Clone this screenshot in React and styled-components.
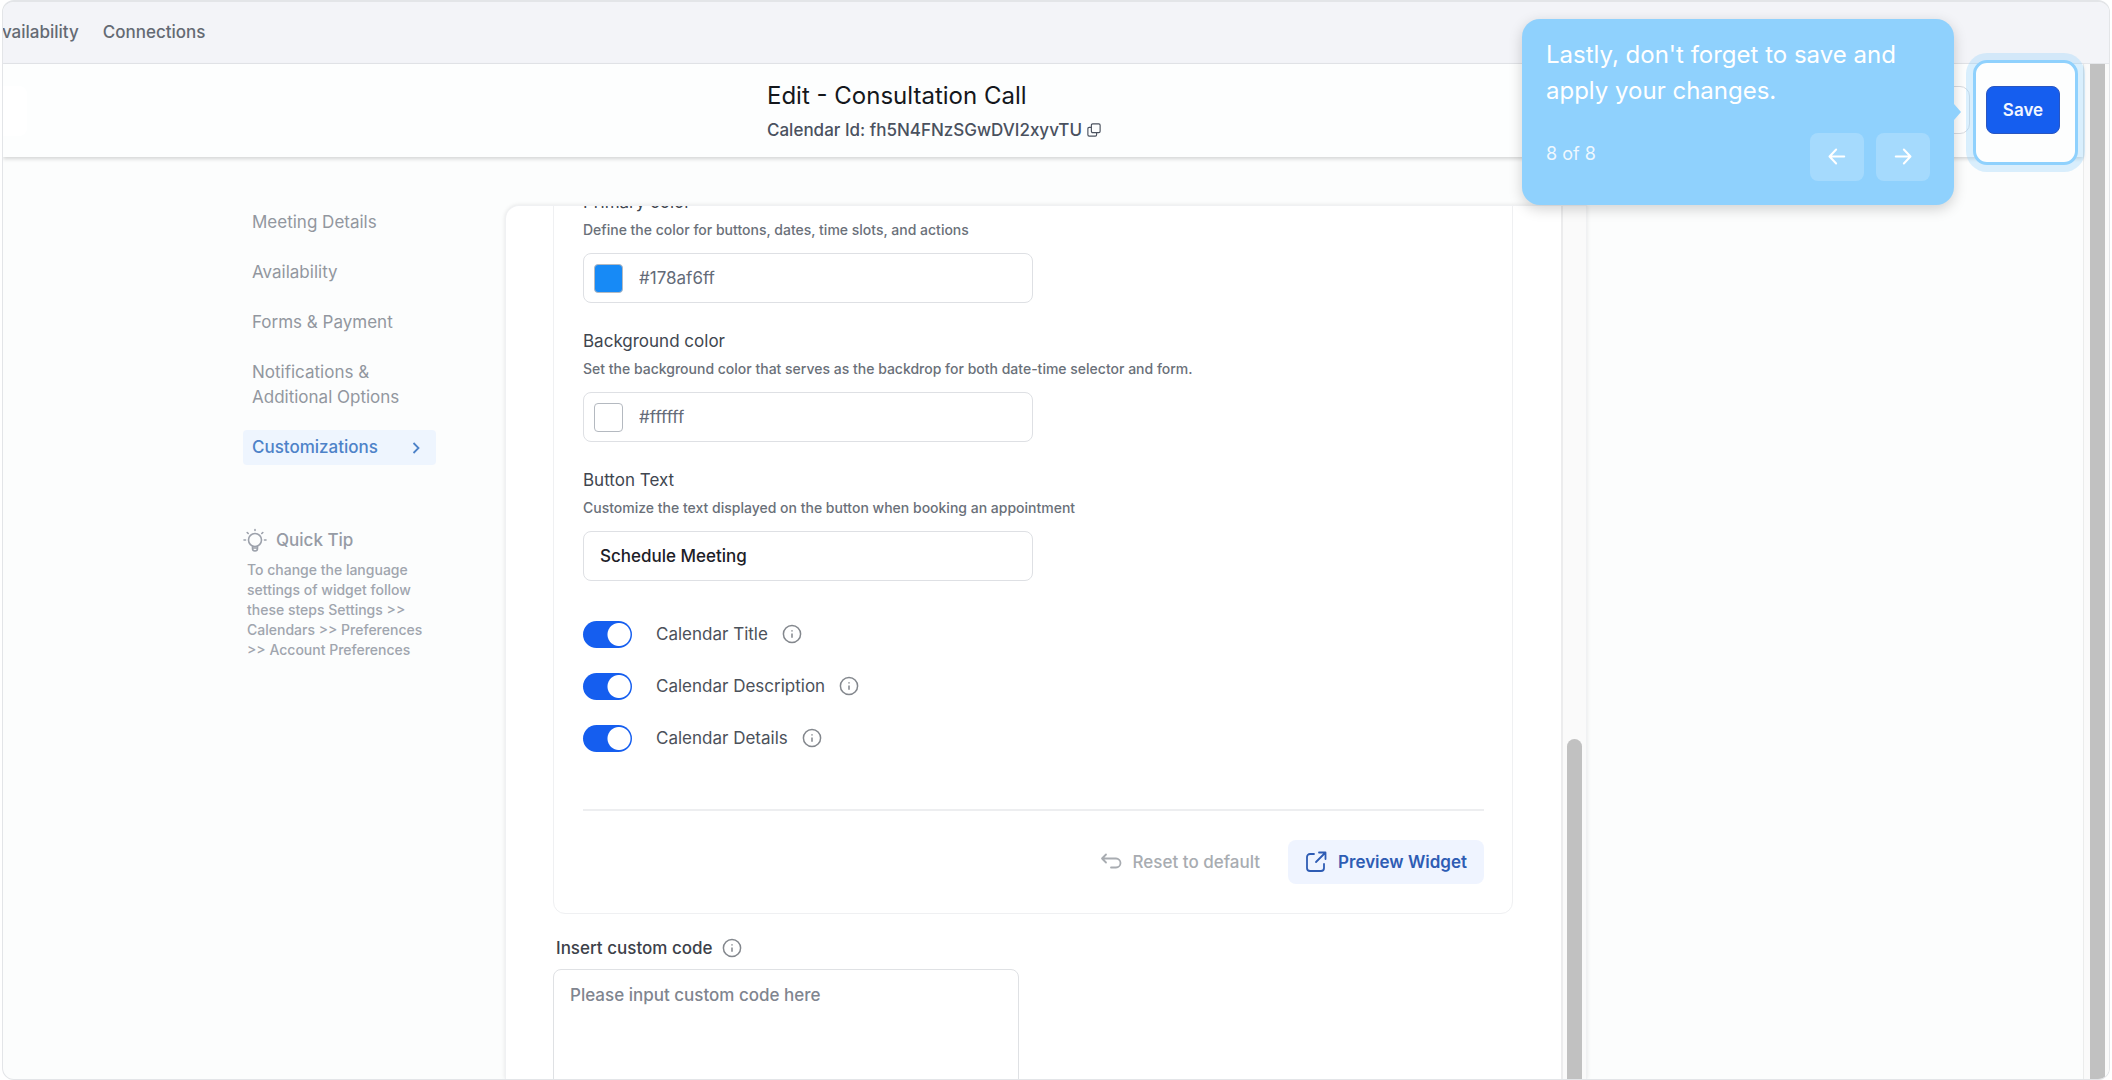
import React from 'react'
import styled, { createGlobalStyle } from 'styled-components'

const GlobalStyle = createGlobalStyle`
* {
  box-sizing: border-box;
}
body {
  margin: 0;
  background: #fff;
  font-family: 'Inter', 'Liberation Sans', sans-serif;
}
button, input, textarea {
  font-family: inherit;
}
`

const sections = ['Meeting Details', 'Availability', 'Forms & Payment', 'Notifications & Additional Options']
const toggles = ['Calendar Title', 'Calendar Description', 'Calendar Details']

const InfoIcon = () => (
  <InfoSvg viewBox="0 0 20 20">
    <circle cx="10" cy="10" r="8.6" />
    <path d="M10 9.4v4.4M10 6.2v1.2" />
  </InfoSvg>
)

const ColorField = ({ id, label, hint, value, color }) => (
  <Field>
    <Label htmlFor={id}>{label}</Label>
    <Hint>{hint}</Hint>
    <InputBox>
      <Swatch $color={color} />
      <ColorInput id={id} defaultValue={value} />
    </InputBox>
  </Field>
)

const Tour = () => (
  <TourCard>
    <TourText>Lastly, don't forget to save and apply your changes.</TourText>
    <TourFooter>
      <TourCount>8 of 8</TourCount>
      <TourButton aria-label="Previous">
        <ArrowSvg viewBox="0 0 20 20"><path d="M18.5 10H1.5M9 1.8L1.2 10L9 18.2" /></ArrowSvg>
      </TourButton>
      <TourButton aria-label="Next">
        <ArrowSvg viewBox="0 0 20 20"><path d="M1.5 10h17M11 1.8l7.8 8.2L11 18.2" /></ArrowSvg>
      </TourButton>
    </TourFooter>
  </TourCard>
)

const App = () => {
  return (
    <Frame>
      <GlobalStyle />
      <TopBar>
        <TopLink href="#availability">Availability</TopLink>
        <TopLink href="#connections">Connections</TopLink>
      </TopBar>
      <Main>
        <Page>
          <Header>
            <BackButton aria-label="Back" />
            <Heading>
              <Title>Edit - Consultation Call</Title>
              <CalendarId>
                Calendar Id: fh5N4FNzSGwDVI2xyvTU
                <CopySvg viewBox="0 0 16 16">
                  <rect x="5" y="1" width="10" height="10" rx="1.5" />
                  <path d="M5 5H2.500A1.500 1.500 0 0 0 1 6.500v7A1.500 1.500 0 0 0 2.500 15h7a1.500 1.500 0 0 0 1.500-1.500V11" />
                </CopySvg>
              </CalendarId>
            </Heading>
            <Actions>
              <CancelButton aria-label="Cancel" />
              <SaveWrap>
                <SaveRing />
                <SaveButton>Save</SaveButton>
                <Tour />
              </SaveWrap>
            </Actions>
          </Header>
          <Body>
            <Sidebar>
              <Menu>
                {sections.map(name => <MenuLink href="#" key={name}>{name}</MenuLink>)}
                <MenuLink href="#" $active>
                  Customizations
                  <ChevronSvg viewBox="0 0 8 12"><path d="M1.500 1l5 5l-5 5" /></ChevronSvg>
                </MenuLink>
              </Menu>
              <TipTitle>
                <BulbSvg viewBox="0 0 24 24">
                  <circle cx="12" cy="12" r="6.500" />
                  <path d="M9.500 18.200V20.500a2.500 2.500 0 0 0 5 0V18.200M9.500 20h5" />
                  <path d="M12 1.500v1M1 12h1.500M21.500 12H23M4.200 4.500l1 1M19.800 4.500l-1 1" />
                </BulbSvg>
                Quick Tip
              </TipTitle>
              <TipText>
                To change the language settings of widget follow these steps Settings &gt;&gt; Calendars &gt;&gt; Preferences &gt;&gt; Account Preferences
              </TipText>
            </Sidebar>
            <Panel>
              <PanelContent>
                <Card>
                  <ColorField
                    id="primary"
                    label="Primary color"
                    hint="Define the color for buttons, dates, time slots, and actions"
                    value="#178af6ff"
                    color="#178af6"
                  />
                  <ColorField
                    id="background"
                    label="Background color"
                    hint="Set the background color that serves as the backdrop for both date-time selector and form."
                    value="#ffffff"
                    color="#ffffff"
                  />
                  <Field>
                    <Label htmlFor="buttonText">Button Text</Label>
                    <Hint>Customize the text displayed on the button when booking an appointment</Hint>
                    <InputBox>
                      <TextInput id="buttonText" defaultValue="Schedule Meeting" />
                    </InputBox>
                  </Field>
                  <Toggles>
                    {toggles.map(name => (
                      <ToggleRow key={name}>
                        <Switch type="checkbox" defaultChecked />
                        {name}
                        <InfoIcon />
                      </ToggleRow>
                    ))}
                  </Toggles>
                  <CardFooter>
                    <ResetButton>
                      <FooterSvg viewBox="0 0 22 22">
                        <path d="M6 3.500L2 7.500l4 4M2 7.500h14a4.500 4.500 0 0 1 0 9h-5" />
                      </FooterSvg>
                      Reset to default
                    </ResetButton>
                    <PreviewButton>
                      <FooterSvg viewBox="0 0 22 22">
                        <path d="M9 3H5a3 3 0 0 0-3 3v11a3 3 0 0 0 3 3h11a3 3 0 0 0 3-3v-4M14 1.500h6.500V8M20 2l-9 9" />
                      </FooterSvg>
                      Preview Widget
                    </PreviewButton>
                  </CardFooter>
                </Card>
                <CodeLabel htmlFor="code">
                  Insert custom code
                  <InfoIcon />
                </CodeLabel>
                <CodeArea id="code" placeholder="Please input custom code here" />
              </PanelContent>
              <PanelScroll>
                <PanelThumb />
              </PanelScroll>
            </Panel>
          </Body>
        </Page>
        <PageScroll>
          <PageThumb />
        </PageScroll>
      </Main>
    </Frame>
  )
}

const Frame = styled.div`
display: flex;
flex-direction: column;
height: 100vh;
margin: 0 2px;
border: 1px solid #e3e5e8;
border-top-width: 2px;
border-radius: 12px;
background: #fcfdfd;
overflow: hidden;
`

const TopBar = styled.nav`
display: flex;
align-items: center;
gap: 24px;
flex: none;
height: 62px;
padding-bottom: 2px;
border-bottom: 1px solid #e4e6ea;
background: #f3f4f8;
`

const TopLink = styled.a`
color: #646a73;
font-size: 17px;
font-weight: 500;
text-decoration: none;

&:first-child {
  margin-left: -12px;
}
`

const Main = styled.div`
display: flex;
flex: 1;
min-height: 0;
`

const Page = styled.div`
display: flex;
flex-direction: column;
flex: 1;
min-width: 0;
`

const Header = styled.header`
display: flex;
align-items: center;
flex: none;
height: 93px;
padding-right: 23px;
background: #fdfefe;
box-shadow: 0 2px 4px rgba(0, 0, 0, 0.16);
z-index: 1;
`

const BackButton = styled.button`
width: 24px;
height: 50px;
border: 0;
border-radius: 0 8px 8px 0;
background: #fff;
`

const Heading = styled.div`
flex: 1;
padding: 2px 0 0 740px;
`

const Title = styled.h1`
margin: 0;
color: #14171c;
font-size: 24px;
font-weight: 400;
line-height: 36px;
`

const CalendarId = styled.div`
display: flex;
align-items: center;
gap: 5px;
color: #4a515e;
font-size: 17px;
font-weight: 500;
line-height: 32px;
`

const CopySvg = styled.svg`
width: 14px;
height: 14px;
fill: none;
stroke: #4a515e;
stroke-width: 1.3;
`

const Actions = styled.div`
display: flex;
gap: 16px;
padding-bottom: 2px;
`

const CancelButton = styled.button`
width: 90px;
height: 48px;
border: 1px solid #d9dce1;
border-radius: 10px;
background: #fff;
`

const SaveWrap = styled.div`
position: relative;
`

const SaveRing = styled.div`
position: absolute;
inset: -26px -18px -31px -13px;
border: 3px solid #8fd1fd;
border-radius: 14px;
background: #fdfefe;
box-shadow: 0 0 0 7px rgba(143, 209, 253, 0.32);
`

const SaveButton = styled.button`
position: relative;
width: 74px;
height: 48px;
padding: 0;
border: 1px solid #2a56c0;
border-radius: 8px;
background: #155eef;
color: #f2f6ff;
font-size: 17px;
font-weight: 600;
`

const TourCard = styled.div`
position: absolute;
top: -67px;
right: calc(100% + 32px);
width: 432px;
padding: 18px 24px 24px;
border-radius: 18px;
background: #8fd1fd;
box-shadow: 0 4px 14px rgba(0, 0, 0, 0.18);
color: #fff;

&::after {
  content: '';
  position: absolute;
  top: 85px;
  left: 100%;
  border: 8px solid transparent;
  border-left: 7px solid #8fd1fd;
  border-right: 0;
}
`

const TourText = styled.p`
margin: 0 0 24px;
font-size: 24px;
line-height: 36px;
`

const TourFooter = styled.div`
display: flex;
align-items: center;
gap: 12px;
`

const TourCount = styled.span`
flex: 1;
padding-bottom: 6px;
font-size: 18px;
opacity: 0.85;
`

const TourButton = styled.button`
display: flex;
align-items: center;
justify-content: center;
width: 54px;
height: 48px;
border: 0;
border-radius: 8px;
background: #a5dafd;
`

const ArrowSvg = styled.svg`
width: 20px;
height: 17px;
fill: none;
stroke: #fff;
stroke-width: 2.4;
stroke-linecap: round;
stroke-linejoin: round;
`

const Body = styled.div`
display: grid;
grid-template-columns: 262px minmax(0, 1082px);
flex: 1;
min-height: 0;
padding: 48px 0 0 240px;
`

const Sidebar = styled.aside`
width: 193px;
`

const Menu = styled.nav`
display: flex;
flex-direction: column;
gap: 15px;
`

const MenuLink = styled.a`
display: flex;
align-items: center;
justify-content: space-between;
padding: 5px 16px 5px 9px;
border-radius: 4px;
background: ${({ $active }) => $active ? '#eef5fe' : 'transparent'};
color: ${({ $active }) => $active ? '#4d82c8' : '#92979f'};
font-size: 17px;
font-weight: ${({ $active }) => $active ? 500 : 400};
line-height: 25px;
text-decoration: none;
`

const ChevronSvg = styled.svg`
width: 8px;
height: 12px;
fill: none;
stroke: #4d82c8;
stroke-width: 1.8;
`

const TipTitle = styled.h2`
display: flex;
align-items: center;
gap: 9px;
margin: 63px 0 8px;
color: #969ba5;
font-size: 17px;
font-weight: 500;
line-height: 24px;
`

const BulbSvg = styled.svg`
width: 24px;
height: 24px;
fill: none;
stroke: #9ca1ab;
stroke-width: 1.6;
stroke-linecap: round;
`

const TipText = styled.p`
margin: 0 0 0 4px;
color: #a0a5ae;
font-size: 14px;
font-weight: 500;
line-height: 20px;
`

const Panel = styled.main`
display: flex;
min-height: 0;
border: 1px solid #f0f1f3;
border-bottom: 0;
border-radius: 14px 0 0 0;
background: #fff;
box-shadow: 0 0 4px rgba(0, 0, 0, 0.1);
overflow: hidden;
`

const PanelContent = styled.div`
flex: 1;
padding: 0 48px 0 47px;
`

/* scrolled past its top edge */
const Card = styled.section`
margin-top: -19px;
padding: 0 28px 29px 29px;
border: 1px solid #eff0f2;
border-radius: 0 0 12px 12px;
`

const Field = styled.div`
margin-bottom: 24px;
`

const Label = styled.label`
display: block;
color: #40464f;
font-size: 17px;
line-height: 28px;
`

const Hint = styled.p`
margin: 0 0 10px;
color: #6a7079;
font-size: 14px;
font-weight: 500;
line-height: 27px;
`

const InputBox = styled.div`
display: flex;
align-items: center;
gap: 16px;
width: 450px;
height: 50px;
padding: 0 10px;
border: 1px solid #dee0e4;
border-radius: 8px;
`

const Swatch = styled.span`
width: 29px;
height: 29px;
border: 1px solid #b4b9c0;
border-radius: 4px;
background: ${({ $color }) => $color};
`

const ColorInput = styled.input`
flex: 1;
padding: 0;
border: 0;
outline: 0;
background: none;
color: #646b78;
font-size: 17px;
`

const TextInput = styled(ColorInput)`
padding-left: 6px;
color: #1c2027;
font-weight: 500;
`

const Toggles = styled.div`
display: flex;
flex-direction: column;
gap: 24px;
padding: 15px 0 57px;
border-bottom: 2px solid #edeef0;
`

const ToggleRow = styled.label`
display: flex;
align-items: center;
color: #4b515a;
font-size: 17px;
line-height: 28px;
`

const Switch = styled.input`
appearance: none;
width: 49px;
height: 27px;
margin: 0 24px 0 0;
border-radius: 14px;
background: radial-gradient(circle at 36px 50%, #fff 11px, #155eef 12px);
`

const InfoSvg = styled.svg`
width: 20px;
height: 20px;
margin-left: 14px;
fill: none;
stroke: #83878d;
stroke-width: 1.5;
`

const CardFooter = styled.div`
display: flex;
justify-content: flex-end;
gap: 28px;
padding-top: 29px;
`

const ResetButton = styled.button`
display: flex;
align-items: center;
gap: 11px;
height: 44px;
padding: 0;
border: 0;
border-radius: 8px;
background: none;
color: #a8acb1;
font-size: 17px;
font-weight: 500;
`

const PreviewButton = styled(ResetButton)`
padding: 0 17px;
background: #eff4ff;
color: #2e5cb4;
font-weight: 600;
`

const FooterSvg = styled.svg`
width: 22px;
height: 22px;
fill: none;
stroke: currentColor;
stroke-width: 1.8;
stroke-linecap: round;
stroke-linejoin: round;
`

const CodeLabel = styled.label`
display: flex;
align-items: center;
margin: 20px 0 7px 3px;
color: #3c4149;
font-size: 17px;
font-weight: 500;
line-height: 28px;

svg {
  margin-left: 10px;
}
`

const CodeArea = styled.textarea`
display: block;
width: 466px;
height: 160px;
padding: 13px 16px;
border: 1px solid #dfe1e4;
border-radius: 8px;
outline: 0;
resize: none;
font-size: 17px;
font-weight: 500;
line-height: 24px;

&::placeholder {
  color: #7f858f;
}
`

const PanelScroll = styled.div`
display: flex;
flex-direction: column;
justify-content: flex-end;
align-items: center;
width: 25px;
border-left: 2px solid #ececed;
background: #fafafa;
`

const PanelThumb = styled.div`
width: 15px;
height: 39%;
border-radius: 8px 8px 0 0;
background: #c1c1c1;
`

const PageScroll = styled.div`
display: flex;
justify-content: center;
width: 26px;
padding-left: 2px;
border-left: 1px solid #ebecec;
background: #fafafa;
`

const PageThumb = styled.div`
width: 15px;
background: #c1c1c1;
`

export default App
